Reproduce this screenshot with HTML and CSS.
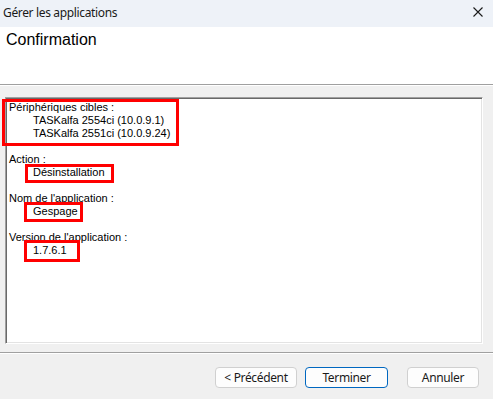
FILE: index.html
```html
<!DOCTYPE html>
<html lang="fr">
<head>
    <meta charset="UTF-8">
    <title>Gérer les applications</title>
    <link rel="stylesheet" href="styles.css">
</head>
<body>
    <div class="window">
        <div class="titlebar">
            <span class="title">Gérer les applications</span>
            <svg class="close" width="10" height="10" viewBox="0 0 10 10">
                <path d="M0.5 0.5 L9.5 9.5 M9.5 0.5 L0.5 9.5" stroke="#1a1a1a" stroke-width="1.1" fill="none"/>
            </svg>
        </div>

        <div class="header">
            <h1>Confirmation</h1>
        </div>

        <div class="main">
            <div class="panel">
                <div class="group">
                    <div class="label">Périphériques cibles :</div>
                    <div class="value">TASKalfa 2554ci (10.0.9.1)</div>
                    <div class="value">TASKalfa 2551ci (10.0.9.24)</div>
                </div>
                <div class="group">
                    <div class="label">Action :</div>
                    <div class="value">Désinstallation</div>
                </div>
                <div class="group">
                    <div class="label">Nom de l'application :</div>
                    <div class="value">Gespage</div>
                </div>
                <div class="group">
                    <div class="label">Version de l'application :</div>
                    <div class="value">1.7.6.1</div>
                </div>

                <!-- red highlight marks drawn over the text -->
                <div class="mark mark-devices"></div>
                <div class="mark mark-action"></div>
                <div class="mark mark-name"></div>
                <div class="mark mark-version"></div>
            </div>
        </div>

        <div class="footer">
            <button class="btn btn-prev">&lt; Précédent</button>
            <button class="btn btn-finish">Terminer</button>
            <button class="btn btn-cancel">Annuler</button>
        </div>
    </div>
</body>
</html>
```

FILE: styles.css
```css
* {
    margin: 0;
    padding: 0;
    box-sizing: border-box;
}

body {
    background: #f0f0f0;
    width: 493px;
    height: 399px;
    overflow: hidden;
}

.window {
    height: 399px;
    display: flex;
    flex-direction: column;
}

.titlebar {
    height: 27px;
    background: #eef2f8;
    display: flex;
    align-items: center;
    justify-content: space-between;
    padding: 0 10px 0 3px;
    font-family: "Noto Sans", sans-serif;
    font-size: 12px;
    color: #1a1a1a;
}

.title {
    margin-top: -2px;
    letter-spacing: -0.35px;
}

.close {
    margin-top: -4px;
}

.header {
    height: 58px;
    background: #fff;
    border-bottom: 1px solid #a0a0a0;
    box-shadow: 0 1px 0 #fff;
    padding: 4px 0 0 6px;
}

.header h1 {
    font-family: "Liberation Sans", Arial, sans-serif;
    font-weight: normal;
    font-size: 16px;
    color: #000;
}

.main {
    padding: 12px 10px 8px 5px;
}

.panel {
    position: relative;
    width: 478px;
    height: 247px;
    background: #fff;
    border-top: 1px solid #a0a0a0;
    border-left: 1px solid #a0a0a0;
    border-right: 1px solid #fff;
    border-bottom: 1px solid #fff;
    box-shadow: inset 1px 1px 0 #696969, inset -1px -1px 0 #e3e3e3;
    padding: 3px 0 0 3px;
    font-family: "Liberation Sans", Arial, sans-serif;
    font-size: 11px;
    line-height: 13px;
    color: #000;
}

.group {
    margin-bottom: 13px;
}

.value {
    padding-left: 24px;
}

.mark {
    position: absolute;
    border: 3px solid #ff0000;
}

.mark-devices {
    left: -4px;
    top: 1px;
    width: 177px;
    height: 47px;
}

.mark-action {
    left: 19px;
    top: 66px;
    width: 89px;
    height: 19px;
}

.mark-name {
    left: 18px;
    top: 104px;
    width: 59px;
    height: 20px;
}

.mark-version {
    left: 18px;
    top: 142px;
    width: 56px;
    height: 22px;
}

.footer {
    flex: 1;
    border-top: 1px solid #a0a0a0;
    box-shadow: inset 0 1px 0 #fff;
    display: flex;
    justify-content: flex-end;
    padding: 14px 14px 0 0;
}

.btn {
    height: 21px;
    background: #fdfdfd;
    border: 1px solid #d0d0d0;
    border-radius: 4px;
    font-family: "Noto Sans", sans-serif;
    font-size: 12px;
    letter-spacing: -0.35px;
    color: #1a1a1a;
}

.btn-prev {
    width: 82px;
}

.btn-finish {
    width: 83px;
    margin-left: 8px;
    border-color: #0067c0;
}

.btn-cancel {
    width: 72px;
    margin-left: 19px;
}
```
